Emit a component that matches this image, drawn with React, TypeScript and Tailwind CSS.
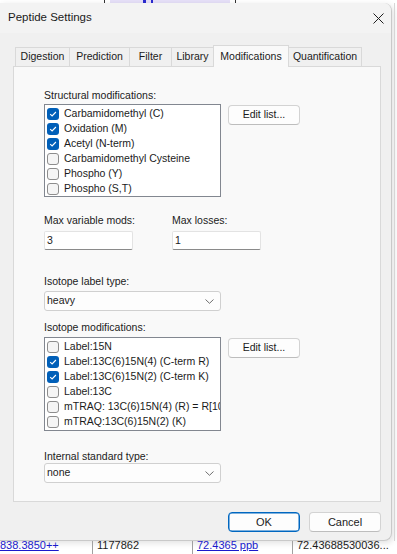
import React from 'react';

type Item = { label: string; checked: boolean };

const structural: Item[] = [
  { label: 'Carbamidomethyl (C)', checked: true },
  { label: 'Oxidation (M)', checked: true },
  { label: 'Acetyl (N-term)', checked: true },
  { label: 'Carbamidomethyl Cysteine', checked: false },
  { label: 'Phospho (Y)', checked: false },
  { label: 'Phospho (S,T)', checked: false },
];

const isotope: Item[] = [
  { label: 'Label:15N', checked: false },
  { label: 'Label:13C(6)15N(4) (C-term R)', checked: true },
  { label: 'Label:13C(6)15N(2) (C-term K)', checked: true },
  { label: 'Label:13C', checked: false },
  { label: 'mTRAQ: 13C(6)15N(4) (R) = R[10]', checked: false },
  { label: 'mTRAQ:13C(6)15N(2) (K)', checked: false },
];

const tabs = ['Digestion', 'Prediction', 'Filter', 'Library', 'Modifications', 'Quantification'];
const tabWidths: Record<string, string> = {
  Digestion: 'w-[54px]',
  Prediction: 'w-[60px]',
  Filter: 'w-[42px]',
  Library: 'w-[42px]',
  Modifications: 'w-[76px]',
  Quantification: 'w-[73px]',
};

const CheckBox: React.FC<{ checked: boolean }> = ({ checked }) =>
  checked ? (
    <span className="w-[12px] h-[12px] shrink-0 rounded-[3px] bg-[#005fb8] flex items-center justify-center">
      <svg width="10" height="10" viewBox="0 0 10 10">
        <path d="M2.2 5.2 L4.1 7 L7.9 3" fill="none" stroke="#ffffff" strokeWidth="1.1" />
      </svg>
    </span>
  ) : (
    <span className="w-[12px] h-[12px] shrink-0 rounded-[3px] bg-[#f5f5f5] border border-[#8d8d8d]" />
  );

const CheckList: React.FC<{ items: Item[]; height: string }> = ({ items, height }) => (
  <div className={`w-[177px] ${height} bg-white border border-[#828790] pt-px overflow-hidden`}>
    {items.map((it) => (
      <div key={it.label} className="h-[15px] flex items-center pl-[2px] gap-[5px] whitespace-nowrap">
        <CheckBox checked={it.checked} />
        <span>{it.label}</span>
      </div>
    ))}
  </div>
);

const Button: React.FC<{ children: React.ReactNode; primary?: boolean }> = ({ children, primary }) => (
  <div
    className={
      primary
        ? 'w-[72px] h-[20px] flex items-center justify-center rounded-[4px] bg-[#fdfdfd] border border-[#0067c0] shadow-[inset_0_0_0_0.5px_#0067c0]'
        : 'w-[72px] h-[20px] flex items-center justify-center rounded-[4px] bg-[#fdfdfd] border border-[#d3d3d3] border-b-[#bdbdbd]'
    }
  >
    {children}
  </div>
);

const TextBox: React.FC<{ value: string }> = ({ value }) => (
  <div className="w-[89px] h-[19px] bg-white border border-[#e3e3e3] border-b-[#8a8a8a] rounded-[2px] flex items-center pl-[2px]">
    {value}
  </div>
);

const Select: React.FC<{ value: string }> = ({ value }) => (
  <div className="w-[177px] h-[20px] bg-[#fdfdfd] border border-[#d0d0d0] rounded-[3px] flex items-center justify-between pl-[2px] pr-[6px]">
    <span>{value}</span>
    <svg width="9" height="5" viewBox="0 0 9 5">
      <path d="M0.5 0.5 L4.5 4.3 L8.5 0.5" fill="none" stroke="#5f5f5f" strokeWidth="0.9" />
    </svg>
  </div>
);

const Dialog: React.FC = () => (
  <div className="w-[392px] h-[538px] shrink-0 bg-[#f0f0f0] rounded-r-[8px] border-r border-b border-[#c9c9c9] shadow-[2px_2px_6px_rgba(0,0,0,0.12)] flex flex-col">
    {/* title bar */}
    <div className="h-[30px] bg-[#f3f3f3] rounded-tr-[8px] flex items-center justify-between pl-[8px] pr-[7px]">
      <span className="text-[11.5px] text-[#1a1a1a]">Peptide Settings</span>
      <svg width="11" height="11" viewBox="0 0 11 11">
        <path d="M0.5 0.5 L10.5 10.5 M10.5 0.5 L0.5 10.5" stroke="#1f1f1f" strokeWidth="1" />
      </svg>
    </div>

    {/* tabs */}
    <div className="mt-[12px] ml-[15px] flex items-end">
      {tabs.map((t) => {
        const selected = t === 'Modifications';
        const last = t === 'Quantification';
        return (
          <div
            key={t}
            className={
              selected
                ? `${tabWidths[t]} h-[22px] -mb-px relative z-10 bg-[#f9f9f9] border border-b-0 border-[#d9d9d9] flex justify-center pt-[3px]`
                : last
                  ? `${tabWidths[t]} h-[19px] bg-[#f0f0f0] border-t border-r border-[#d9d9d9] flex items-center justify-center`
                  : `${tabWidths[t]} h-[19px] bg-[#f0f0f0] border-t border-l border-[#d9d9d9] flex items-center justify-center`
            }
          >
            {t}
          </div>
        );
      })}
    </div>

    {/* tab panel */}
    <div className="ml-[13px] w-[368px] h-[436px] bg-[#f9f9f9] border border-[#d9d9d9] pl-[30px] flex flex-col">
      <div className="mt-[22px] leading-[13px]">Structural modifications:</div>
      <div className="mt-[2px] flex items-start gap-[7px]">
        <CheckList items={structural} height="h-[93px]" />
        <div className="mt-px">
          <Button>Edit list...</Button>
        </div>
      </div>

      <div className="mt-[17px] grid grid-cols-[128px_1fr]">
        <div className="leading-[13px]">Max variable mods:</div>
        <div className="leading-[13px]">Max losses:</div>
        <div className="mt-[4px]">
          <TextBox value="3" />
        </div>
        <div className="mt-[4px]">
          <TextBox value="1" />
        </div>
      </div>

      <div className="mt-[25px] leading-[13px]">Isotope label type:</div>
      <div className="mt-[3px]">
        <Select value="heavy" />
      </div>

      <div className="mt-[10px] leading-[13px]">Isotope modifications:</div>
      <div className="mt-[3px] flex items-start gap-[7px]">
        <CheckList items={isotope} height="h-[94px]" />
        <div className="mt-px">
          <Button>Edit list...</Button>
        </div>
      </div>

      <div className="mt-[19px] leading-[13px]">Internal standard type:</div>
      <div className="mt-0">
        <Select value="none" />
      </div>
    </div>

    {/* buttons */}
    <div className="ml-[13px] w-[368px] mt-[10px] flex justify-end gap-[9px] text-[11px]">
      <Button primary>OK</Button>
      <Button>Cancel</Button>
    </div>
  </div>
);

export default function App() {
  return (
    <div className="w-[397px] h-[554px] overflow-hidden bg-white text-[10.5px] text-[#1b1b1b] font-['Liberation_Sans',Arial,sans-serif]">
      {/* strip of the main window showing above the dialog */}
      <div className="h-[3px] flex">
        <div className="w-[104px]" />
        <div className="w-px bg-[#333]" />
        <div className="w-[5px]" />
        <div className="w-[120px] bg-[#e6e0f8] flex">
          <div className="w-[33px]" />
          <div className="w-[3px] bg-[#2a2ad0]" />
          <div className="w-[5px]" />
          <div className="w-[2px] bg-[#2a2ad0]" />
        </div>
        <div className="w-[5px]" />
        <div className="w-px bg-[#333]" />
      </div>

      <div className="flex">
        <Dialog />
        <div className="w-[5px] flex justify-end">
          <div className="w-px bg-[#d6d6d6] mr-[2px]" />
        </div>
      </div>

      {/* row of the grid behind the dialog */}
      <div className="h-[13px] overflow-hidden flex text-[11px] leading-[13px]">
        <div className="w-[92px] -mt-[2px] text-[#1a1acc] underline">838.3850++</div>
        <div className="w-px bg-[#a0a0a0]" />
        <div className="w-[99px] pl-[4px] -mt-[2px]">1177862</div>
        <div className="w-px bg-[#a0a0a0]" />
        <div className="w-[99px] pl-[4px] -mt-[2px] text-[#1a1acc] underline">72.4365 ppb</div>
        <div className="w-px bg-[#a0a0a0]" />
        <div className="w-[100px] pl-[4px] -mt-[2px] whitespace-nowrap">72.43688530036...</div>
      </div>
    </div>
  );
}
